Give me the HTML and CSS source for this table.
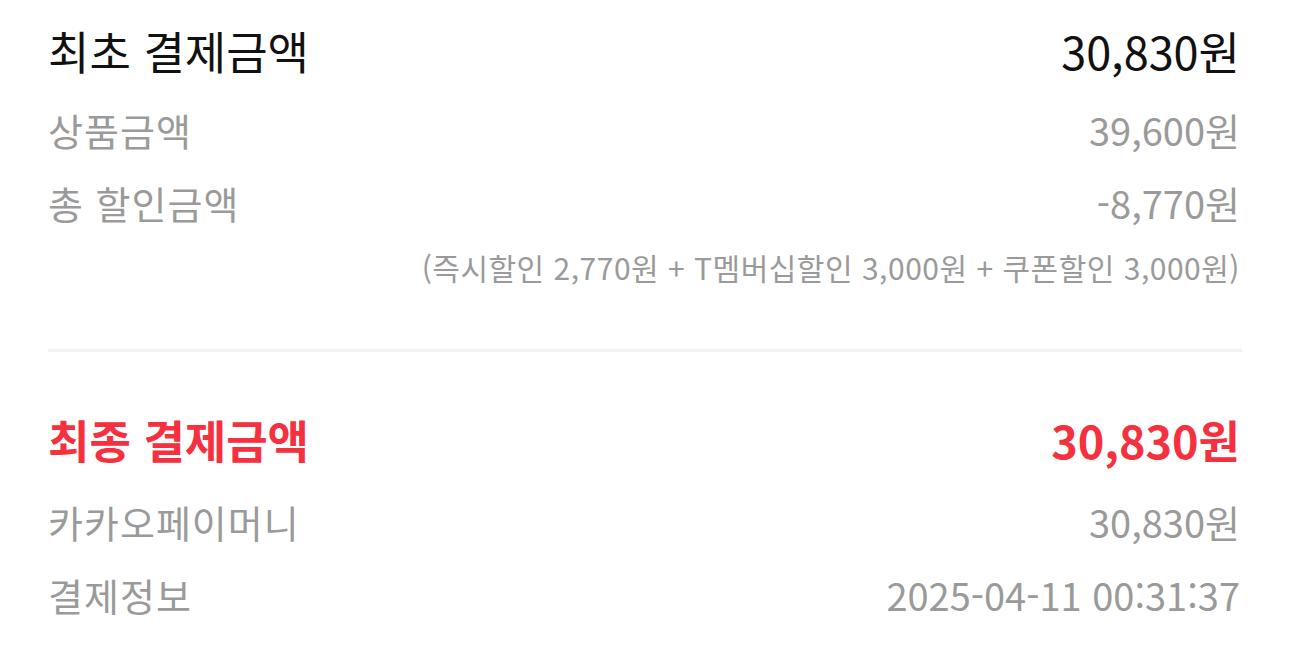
FILE: index.html
```html
<!DOCTYPE html>
<html lang="ko">
<head>
    <meta charset="UTF-8">
    <meta name="viewport" content="width=device-width, initial-scale=1.0">
    <title>결제 정보</title>
    <link rel="stylesheet" href="styles.css">
</head>
<body>

    <!-- 최초 결제 -->
    <section class="block">
        <div class="row row-head">
            <span>최초 결제금액</span>
            <span>30,830원</span>
        </div>
        <div class="row row-sub">
            <span class="label">상품금액</span>
            <span>39,600원</span>
        </div>
        <div class="row row-sub">
            <span class="label">총 할인금액</span>
            <span>-8,770원</span>
        </div>
        <p class="detail">(즉시할인 2,770원 + T멤버십할인 3,000원 + 쿠폰할인 3,000원)</p>
    </section>

    <hr class="divider">

    <!-- 최종 결제 -->
    <section class="block">
        <div class="row row-head row-final">
            <span>최종 결제금액</span>
            <span>30,830원</span>
        </div>
        <div class="row row-sub">
            <span class="label">카카오페이머니</span>
            <span>30,830원</span>
        </div>
        <div class="row row-sub">
            <span class="label">결제정보</span>
            <span>2025-04-11 00:31:37</span>
        </div>
    </section>

</body>
</html>
```

FILE: styles.css
```css
body {
    margin: 0;
    padding: 14px 50px 0 48px;
    font-family: "Noto Sans CJK KR", "Noto Sans", sans-serif;
    background: #fff;
    color: #111;
}
.row {
    display: flex;
    justify-content: space-between;
    align-items: center;
}
.row-head {
    height: 72px;
    font-size: 45px;
    color: #111;
}
.row-sub {
    height: 73px;
    font-size: 38px;
    color: #9a9a9a;
}
.row-sub .label { letter-spacing: 1px; }
.row-head + .row-sub { margin-top: 7px; }
.row-final + .row-sub { margin-top: 10px; }
.detail {
    margin: 8px 0 0;
    text-align: right;
    font-size: 30px;
    line-height: 40px;
    letter-spacing: 0.5px;
    color: #9a9a9a;
}
.divider {
    border: none;
    height: 3px;
    background: #f2f2f2;
    margin: 62px -2px 51px 0;
}
.row-final {
    color: #f5303f;
    font-weight: bold;
}
```
